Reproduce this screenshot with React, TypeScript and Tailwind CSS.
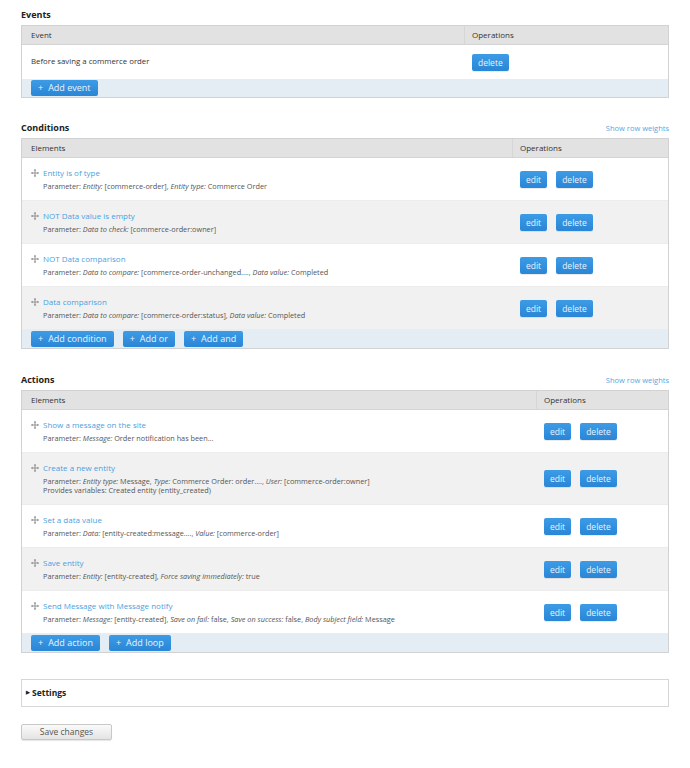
import type { ReactNode } from "react";

type Param = [string, string];

type Element = {
  title: string;
  params: Param[];
  extra?: string;
};

const conditions: Element[] = [
  {
    title: "Entity is of type",
    params: [
      ["Entity", "[commerce-order]"],
      ["Entity type", "Commerce Order"],
    ],
  },
  {
    title: "NOT Data value is empty",
    params: [["Data to check", "[commerce-order:owner]"]],
  },
  {
    title: "NOT Data comparison",
    params: [
      ["Data to compare", "[commerce-order-unchanged...."],
      ["Data value", "Completed"],
    ],
  },
  {
    title: "Data comparison",
    params: [
      ["Data to compare", "[commerce-order:status]"],
      ["Data value", "Completed"],
    ],
  },
];

const actions: Element[] = [
  {
    title: "Show a message on the site",
    params: [["Message", "Order notification has been..."]],
  },
  {
    title: "Create a new entity",
    params: [
      ["Entity type", "Message"],
      ["Type", "Commerce Order: order...."],
      ["User", "[commerce-order:owner]"],
    ],
    extra: "Provides variables: Created entity (entity_created)",
  },
  {
    title: "Set a data value",
    params: [
      ["Data", "[entity-created:message...."],
      ["Value", "[commerce-order]"],
    ],
  },
  {
    title: "Save entity",
    params: [
      ["Entity", "[entity-created]"],
      ["Force saving immediately", "true"],
    ],
  },
  {
    title: "Send Message with Message notify",
    params: [
      ["Message", "[entity-created]"],
      ["Save on fail", "false"],
      ["Save on success", "false"],
      ["Body subject field", "Message"],
    ],
  },
];

function BlueButton({ children }: { children: ReactNode }) {
  return (
    <button
      type="button"
      className="h-[17px] rounded-[2px] bg-gradient-to-b from-[#3d9be6] to-[#2a86d6] px-[6px] text-[8.5px] leading-[17px] text-[#e8f3fc] shadow-[0_1px_0_rgba(0,0,0,0.08)]"
    >
      {children}
    </button>
  );
}

function AddButton({ children }: { children: ReactNode }) {
  return (
    <button
      type="button"
      className="flex h-[16px] items-center gap-[5px] rounded-[2px] bg-gradient-to-b from-[#3d9be6] to-[#2a86d6] px-[7px] text-[9px] leading-[16px] text-[#eaf4fd]"
    >
      <span>+</span>
      {children}
    </button>
  );
}

function DragHandle() {
  return (
    <svg width="8" height="8" viewBox="0 0 8 8" className="mt-[2px] shrink-0">
      <g fill="none" stroke="#8a8a8a" strokeWidth="0.9">
        <path d="M4 0.5v7M0.5 4h7" />
      </g>
      <g fill="#8a8a8a">
        <path d="M4 0l1.3 1.6h-2.6zM4 8l1.3-1.6h-2.6zM0 4l1.6-1.3v2.6zM8 4l-1.6-1.3v2.6z" />
      </g>
    </svg>
  );
}

function SectionHeading({ title, weights }: { title: string; weights?: boolean }) {
  return (
    <div className="mb-[4px] flex h-[12px] items-center justify-between">
      <h2 className="text-[9px] font-bold leading-[12px] text-[#222]">{title}</h2>
      {weights && (
        <a className="text-[7.5px] leading-[12px] text-[#59a6e3]">Show row weights</a>
      )}
    </div>
  );
}

function TableHeader({ first, opsWidth }: { first: string; opsWidth: string }) {
  return (
    <div className="flex h-[19px] border-b border-[#d4d4d4] bg-[#e2e2e2] text-[8px] leading-[18px] text-[#333]">
      <div className="flex-1 pl-[9px]">{first}</div>
      <div className={`${opsWidth} border-l border-[#d6d6d6] pl-[7px]`}>Operations</div>
    </div>
  );
}

function ElementRow({
  item,
  shaded,
  opsWidth,
}: {
  item: Element;
  shaded: boolean;
  opsWidth: string;
}) {
  return (
    <div
      className={`flex items-center ${shaded ? "bg-[#f1f1f1]" : "bg-white"} border-b border-[#ececec]`}
    >
      <div className="flex flex-1 gap-[4px] pb-[9px] pl-[9px] pt-[9px]">
        <DragHandle />
        <div>
          <a className="block text-[8px] leading-[11px] text-[#4b9fe1]">{item.title}</a>
          <p className="mt-[4px] text-[7.3px] leading-[9px] text-[#555]">
            Parameter:{" "}
            {item.params.map(([label, value], i) => (
              <span key={label}>
                <em>{label}:</em> {value}
                {i < item.params.length - 1 ? ", " : ""}
              </span>
            ))}
          </p>
          {item.extra && <p className="text-[7.3px] leading-[9px] text-[#555]">{item.extra}</p>}
        </div>
      </div>
      <div className={`${opsWidth} flex gap-[9px] pl-[8px]`}>
        <BlueButton>edit</BlueButton>
        <BlueButton>delete</BlueButton>
      </div>
    </div>
  );
}

function Footer({ children }: { children: ReactNode }) {
  return (
    <div className="flex h-[18px] items-center gap-[9px] bg-[#e4edf3] pl-[9px]">{children}</div>
  );
}

function ElementTable({
  title,
  items,
  opsWidth,
  footer,
}: {
  title: string;
  items: Element[];
  opsWidth: string;
  footer: ReactNode;
}) {
  return (
    <section>
      <SectionHeading title={title} weights />
      <div className="border border-[#d2d2d2]">
        <TableHeader first="Elements" opsWidth={opsWidth} />
        {items.map((item, i) => (
          <ElementRow key={item.title} item={item} shaded={i % 2 === 1} opsWidth={opsWidth} />
        ))}
        <Footer>{footer}</Footer>
      </div>
    </section>
  );
}

export default function App() {
  return (
    <div
      className="min-h-[768px] bg-white px-[21px] pt-[9px] text-[#333]"
      style={{ fontFamily: '"Open Sans", "Noto Sans", sans-serif' }}
    >
      <section>
        <SectionHeading title="Events" />
        <div className="border border-[#d2d2d2]">
          <TableHeader first="Event" opsWidth="w-[204px]" />
          <div className="flex h-[34px] items-center bg-white">
            <div className="flex-1 pl-[9px] text-[7.8px]">Before saving a commerce order</div>
            <div className="flex w-[204px] pl-[8px]">
              <BlueButton>delete</BlueButton>
            </div>
          </div>
          <Footer>
            <AddButton>Add event</AddButton>
          </Footer>
        </div>
      </section>

      <div className="mt-[24px]">
        <ElementTable
          title="Conditions"
          items={conditions}
          opsWidth="w-[156px]"
          footer={
            <>
              <AddButton>Add condition</AddButton>
              <AddButton>Add or</AddButton>
              <AddButton>Add and</AddButton>
            </>
          }
        />
      </div>

      <div className="mt-[25px]">
        <ElementTable
          title="Actions"
          items={actions}
          opsWidth="w-[132px]"
          footer={
            <>
              <AddButton>Add action</AddButton>
              <AddButton>Add loop</AddButton>
            </>
          }
        />
      </div>

      <fieldset className="mt-[26px] flex h-[28px] items-center border border-[#d6d6d6] px-[4px]">
        <span className="flex items-center gap-[2px] text-[8.5px] font-bold text-[#222]">
          <span className="text-[5px]">▶</span>
          Settings
        </span>
      </fieldset>

      <button
        type="button"
        className="mt-[17px] h-[16px] w-[91px] rounded-[2px] border border-[#c8c8c8] bg-gradient-to-b from-[#fafafa] to-[#e4e4e4] text-[8.5px] leading-[14px] text-[#555] shadow-[0_1px_1px_rgba(0,0,0,0.1)]"
      >
        Save changes
      </button>
    </div>
  );
}
